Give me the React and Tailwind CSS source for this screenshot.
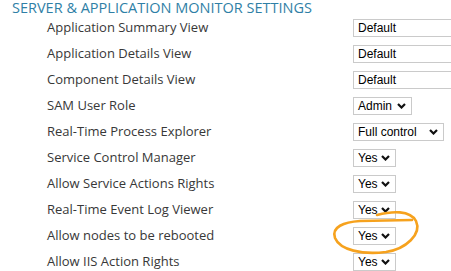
import React from "react";

// rows of the permission table
const ROWS = [
  { label: "Application Summary View", value: "Default", width: 150, arrow: false },
  { label: "Application Details View", value: "Default", width: 150, arrow: false },
  { label: "Component Details View", value: "Default", width: 150, arrow: false },
  { label: "SAM User Role", value: "Admin", width: 59, arrow: true },
  { label: "Real-Time Process Explorer", value: "Full control", width: 91, arrow: true },
  { label: "Service Control Manager", value: "Yes", width: 43, arrow: true },
  { label: "Allow Service Actions Rights", value: "Yes", width: 43, arrow: true },
  { label: "Real-Time Event Log Viewer", value: "Yes", width: 43, arrow: true },
  { label: "Allow nodes to be rebooted", value: "Yes", width: 43, arrow: true },
  { label: "Allow IIS Action Rights", value: "Yes", width: 43, arrow: true },
];

function Chevron() {
  return (
    <svg width="9" height="6" viewBox="0 0 9 6" className="shrink-0">
      <polyline points="1,1 4.5,4.5 8,1" fill="none" stroke="#111" strokeWidth="2.2" />
    </svg>
  );
}

function FakeSelect({ value, width, arrow }) {
  return (
    <div
      className="h-[18px] shrink-0 flex items-center justify-between pl-[4px] pr-[5px] border border-[#cacaca] bg-white text-[12px] leading-none text-black font-['Liberation_Sans',Arial,sans-serif]"
      style={{ width }}
    >
      <span>{value}</span>
      {arrow && <Chevron />}
    </div>
  );
}

export default function App() {
  return (
    <div className="relative w-[451px] h-[271px] overflow-hidden bg-white font-['Open_Sans',sans-serif]">
      <h1 className="h-[15px] pl-[12px] text-[14.5px] leading-[15px] font-normal text-[#2f7fa6] whitespace-nowrap">
        SERVER &amp; APPLICATION MONITOR SETTINGS
      </h1>
      <div className="flex flex-col">
        {ROWS.map((r) => (
          <div key={r.label} className="h-[26px] flex items-center pl-[47px]">
            <span className="w-[306px] shrink-0 text-[13px] text-[#383838] whitespace-nowrap">{r.label}</span>
            <FakeSelect value={r.value} width={r.width} arrow={r.arrow} />
          </div>
        ))}
      </div>

      {/* hand-drawn highlight */}
      <svg className="absolute left-0 top-0 pointer-events-none" width="451" height="271">
        <path
          d="M377 215 C392 211 410 210 416 221 C422 234 406 249 386 252 C362 255 340 250 335 238 C331 227 344 222 360 221 L412 220"
          fill="none"
          stroke="#f6a21e"
          strokeWidth="2.6"
          strokeLinecap="round"
          strokeLinejoin="round"
        />
      </svg>
    </div>
  );
}
